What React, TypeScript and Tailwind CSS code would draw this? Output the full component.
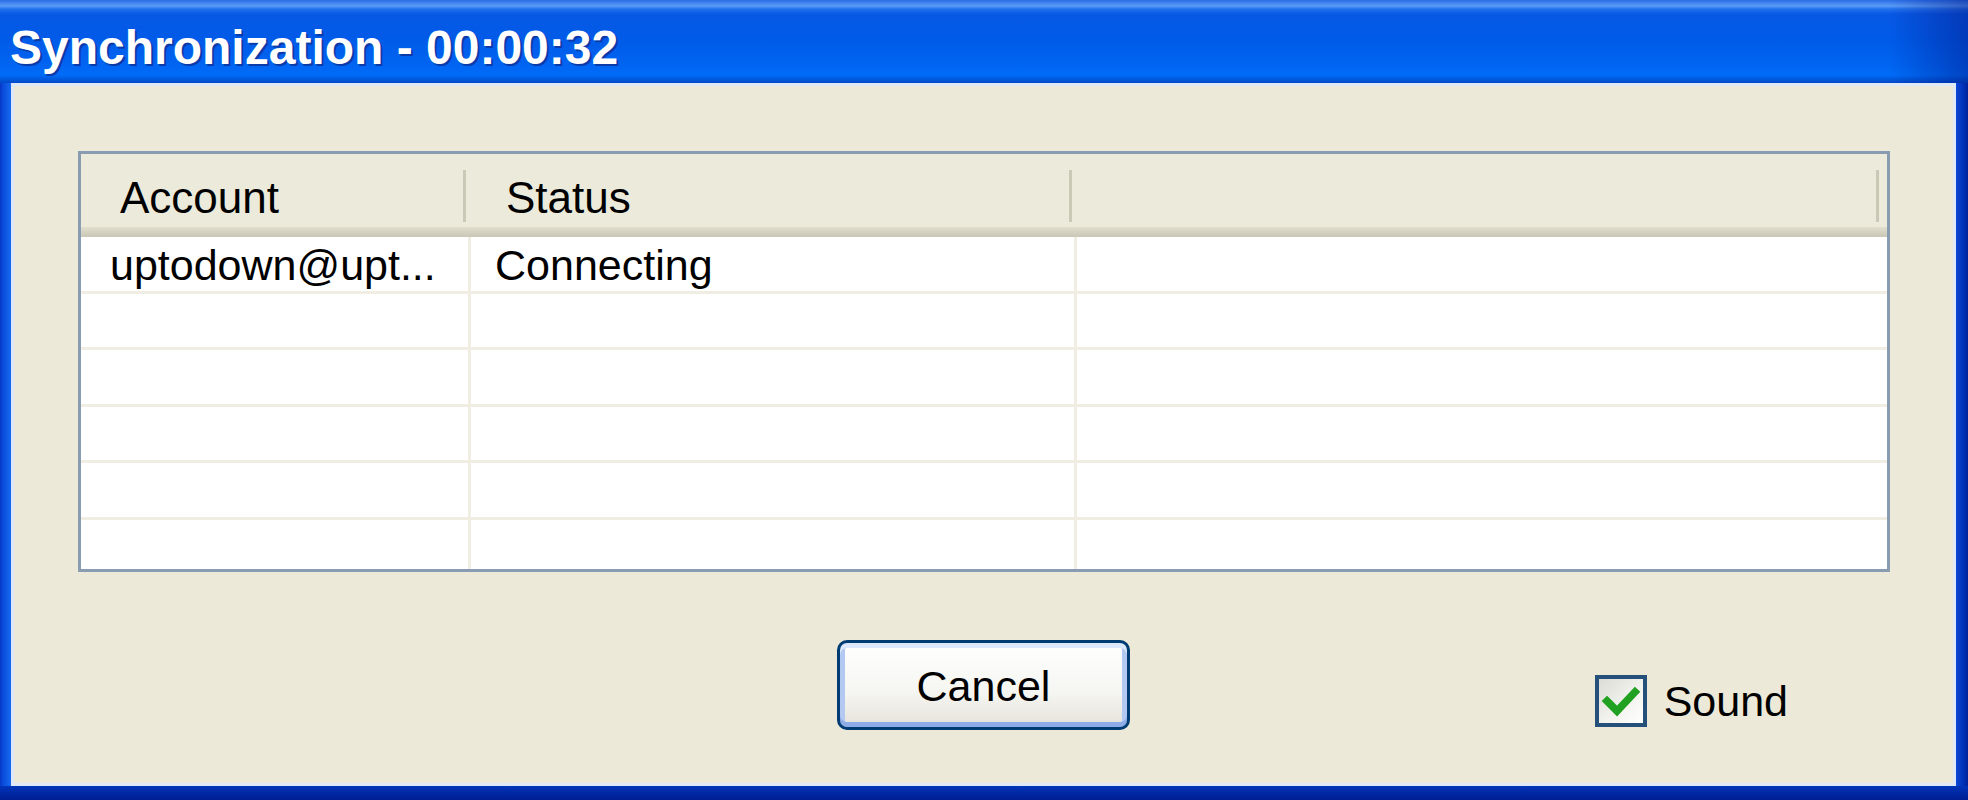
import React from "react";

const rows = [
  { account: "uptodown@upt...", status: "Connecting" },
  { account: "", status: "" },
  { account: "", status: "" },
  { account: "", status: "" },
  { account: "", status: "" },
  { account: "", status: "" },
];

const CheckMark: React.FC = () => (
  <svg width="44" height="44" viewBox="0 0 44 44" className="block">
    <polyline
      points="8,22 18,32 36,13"
      fill="none"
      stroke="#21A121"
      strokeWidth="7.5"
      strokeLinecap="square"
    />
  </svg>
);

const App: React.FC = () => {
  return (
    <div
      className="flex h-[800px] w-[1968px] flex-col overflow-hidden bg-[#0A3CD0]"
      style={{ fontFamily: '"Liberation Sans", Arial, sans-serif' }}
    >
      {/* title bar */}
      <div className="flex h-[83px] shrink-0 items-center bg-[linear-gradient(to_right,transparent_96%,rgba(0,20,130,0.45)),linear-gradient(to_bottom,#2A6CE6_0px,#5A9CF6_6px,#2272EE_9px,#0758E4_14px,#005BE8_40px,#0065F2_66px,#006CF8_75px,#0048C6_83px)] pl-[10px] pt-[12px]">
        <span className="text-[48px] leading-none font-bold text-white [text-shadow:2px_2px_0_#0B3BA8]">
          Synchronization - 00:00:32
        </span>
      </div>

      {/* window body */}
      <div className="flex flex-1">
        <div className="w-[11px] shrink-0 bg-[linear-gradient(to_right,#0836C4_0px,#0A4CDC_3px,#166AEE_11px)]" />

        <div className="flex flex-1 flex-col border-[3px] border-[#DEE8F7] bg-[#ECE9D8]">
          {/* list view */}
          <div className="ml-[64px] mt-[65px] h-[421px] w-[1812px] overflow-hidden border-[3px] border-[#8A9CB2] bg-white">
            {/* header */}
            <div className="flex h-[83px] flex-col">
              <div className="flex h-[73px] bg-[#EBEADB] text-[44px] leading-none text-black">
                <div className="flex w-[390px] items-center justify-between pl-[39px] pr-[5px]">
                  <span className="mt-[15px]">Account</span>
                  <div className="mt-[10px] h-[52px] w-[3px] bg-[#CBC8B5]" />
                </div>
                <div className="flex w-[606px] items-center justify-between pl-[35px] pr-[5px]">
                  <span className="mt-[15px]">Status</span>
                  <div className="mt-[10px] h-[52px] w-[3px] bg-[#CBC8B5]" />
                </div>
                <div className="flex flex-1 items-center justify-end pr-[8px]">
                  <div className="mt-[10px] h-[52px] w-[3px] bg-[#CBC8B5]" />
                </div>
              </div>
              <div className="h-[10px] bg-[linear-gradient(to_bottom,#E2DECD,#D6D2C2,#CBC7B8)]" />
            </div>

            {/* rows */}
            {rows.map((r, i) => (
              <div
                key={i}
                className="flex h-[56.5px] border-b-[3px] border-[#F0EEE3] text-[43px] leading-none text-black"
              >
                <div className="flex w-[390px] items-center border-r-[3px] border-[#F0EEE3] pl-[29px] pt-[4px] whitespace-nowrap">
                  {r.account}
                </div>
                <div className="flex w-[606px] items-center border-r-[3px] border-[#F0EEE3] pl-[24px] pt-[4px] whitespace-nowrap">
                  {r.status}
                </div>
                <div className="flex-1" />
              </div>
            ))}
          </div>

          {/* bottom controls */}
          <div className="mt-[68px] grid grid-cols-[1fr_auto_1fr]">
            <div />
            <button className="flex h-[90px] w-[293px] items-center justify-center rounded-[10px] border-[3px] border-[#003C74] bg-[linear-gradient(to_bottom,#FFFFFF,#F5F5F1_60%,#E4E2DA)] pt-[2px] text-[43px] text-black shadow-[inset_0_5px_0_#DCE8FB,inset_0_-5px_0_#8EACE8,inset_5px_0_0_#B3C9F2,inset_-5px_0_0_#B3C9F2]">
              Cancel
            </button>
            <div className="flex justify-end">
              <label className="mr-[165px] mt-[35px] flex h-[52px] items-center gap-[17px] text-[43px] text-black">
                <span className="flex h-[52px] w-[52px] items-center justify-center border-[4px] border-[#24507A] bg-[linear-gradient(135deg,#DCDCD6,#F2F2EE_55%,#FFFFFF)]">
                  <CheckMark />
                </span>
                <span>Sound</span>
              </label>
            </div>
          </div>
        </div>

        <div className="w-[12px] shrink-0 bg-[linear-gradient(to_right,#0A46D6,#0030B4_8px,#00229A)]" />
      </div>

      {/* bottom frame */}
      <div className="h-[14px] shrink-0 bg-[linear-gradient(to_bottom,#0034B8,#001E92)]" />
    </div>
  );
};

export default App;
